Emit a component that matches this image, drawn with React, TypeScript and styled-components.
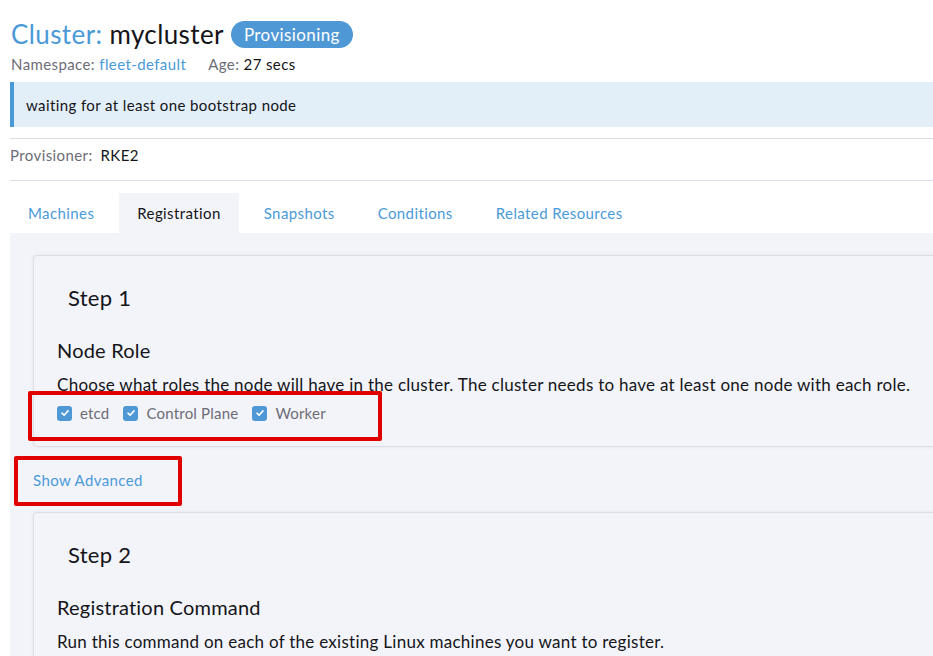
import React from 'react'
import styled, { createGlobalStyle } from 'styled-components'

const color = {
  link: '#4a9ad8',
  badge: '#4f98d6',
  text: '#141419',
  muted: '#6c6c76',
  border: '#dcdee7',
  panel: '#f3f4f9',
  banner: '#e3eff8',
  mark: '#e00000',
}

const GlobalStyle = createGlobalStyle`
  html, body {
    margin: 0;
    padding: 0;
    background: #fff;
    overflow: hidden;
  }
  body {
    font-family: Lato, 'Open Sans', 'Liberation Sans', sans-serif;
    color: ${color.text};
    letter-spacing: 0.4px;
  }
`

const Page = styled.div`
  position: relative;
  width: 1000px;
  padding: 17px 0 0 10px;
  box-sizing: border-box;
`

const TitleRow = styled.div`
  display: flex;
  align-items: center;
  gap: 6px;
  height: 34px;
  padding-left: 1px;
`

const Title = styled.h1`
  margin: 0;
  font-size: 26px;
  font-weight: 400;
  line-height: 34px;
  color: ${color.text};

  span {
    color: ${color.link};
  }
`

const Badge = styled.span`
  display: inline-flex;
  align-items: center;
  height: 27px;
  padding: 0 13px;
  border-radius: 14px;
  background: ${color.badge};
  color: #fff;
  font-size: 17px;
  margin-left: 1px;
`

const Meta = styled.div`
  display: flex;
  gap: 22px;
  font-size: 15px;
  line-height: 20px;
  margin-top: 3px;
  padding-left: 1px;
  color: ${color.text};

  .label {
    color: ${color.muted};
  }
  a {
    color: ${color.link};
    text-decoration: none;
  }
`

const Banner = styled.div`
  margin-top: 8px;
  height: 45px;
  display: flex;
  align-items: center;
  background: ${color.banner};
  border-left: 4px solid ${color.link};
  padding-left: 12px;
  font-size: 15px;
`

const Rule = styled.hr`
  margin: 0;
  border: 0;
  border-top: 1px solid ${color.border};
`

const Provisioner = styled.div`
  display: flex;
  gap: 8px;
  padding: 6px 0 15px;
  font-size: 15px;
  line-height: 20px;

  .label {
    color: ${color.muted};
  }
`

const Tabs = styled.div`
  display: flex;
  gap: 7px;
  margin-top: 12px;
`

const Tab = styled.div<{ $active?: boolean }>`
  height: 40px;
  display: flex;
  align-items: center;
  padding: 0 18px;
  font-size: 15px;
  color: ${(p) => (p.$active ? color.text : color.link)};
  background: ${(p) => (p.$active ? color.panel : 'transparent')};
`

const TabBody = styled.div`
  background: ${color.panel};
  padding: 22px 0 40px 23px;
`

const Card = styled.section`
  background: ${color.panel};
  border: 1px solid ${color.border};
  border-radius: 4px;
  box-shadow: 0 0 4px rgba(0, 0, 0, 0.06);
  padding: 19px 23px 23px;
`

const StepTitle = styled.h2`
  margin: 0;
  padding: 10px 11px;
  font-size: 22px;
  font-weight: 400;
  line-height: 26px;
  letter-spacing: 0.3px;
`

const SectionTitle = styled.h3`
  margin: 18px 0 0;
  font-size: 20px;
  font-weight: 400;
  line-height: 23px;
  letter-spacing: 0.2px;
`

const Description = styled.p`
  margin: 12px 0 0;
  font-size: 17px;
  line-height: 21px;
  letter-spacing: 0.27px;
`

const Checks = styled.div`
  display: flex;
  gap: 14px;
  margin-top: 8px;
`

const Check = styled.label`
  display: flex;
  align-items: center;
  gap: 8px;
  font-size: 15px;
  line-height: 20px;
  letter-spacing: 0.2px;
  color: ${color.muted};
`

const Box = styled.span`
  width: 15px;
  height: 15px;
  border-radius: 3px;
  background: ${color.badge};
  display: inline-flex;
  align-items: center;
  justify-content: center;
`

const AdvancedLink = styled.a`
  display: block;
  margin: 23px 0 22px;
  font-size: 15px;
  line-height: 20px;
  color: ${color.link};
  text-decoration: none;
`

const Callout = styled.div<{ $x: number; $y: number; $w: number; $h: number }>`
  position: absolute;
  left: ${(p) => p.$x}px;
  top: ${(p) => p.$y}px;
  width: ${(p) => p.$w}px;
  height: ${(p) => p.$h}px;
  border: 4px solid ${color.mark};
  border-radius: 2px;
  box-sizing: border-box;
  pointer-events: none;
`

const Checkbox = ({ label }: { label: string }) => (
  <Check>
    <Box>
      <svg width="10" height="10" viewBox="0 0 10 10">
        <path
          d="M2 5.2 L4.1 7.2 L8 2.9"
          fill="none"
          stroke="#fff"
          strokeWidth="1.6"
          strokeLinecap="round"
          strokeLinejoin="round"
        />
      </svg>
    </Box>
    {label}
  </Check>
)

const tabs = ['Machines', 'Registration', 'Snapshots', 'Conditions', 'Related Resources']

const App = () => (
  <>
    <GlobalStyle />
    <Page>
      <TitleRow>
        <Title>
          <span>Cluster:</span> mycluster
        </Title>
        <Badge>Provisioning</Badge>
      </TitleRow>
      <Meta>
        <div>
          <span className="label">Namespace: </span>
          <a href="#">fleet-default</a>
        </div>
        <div>
          <span className="label">Age: </span>27 secs
        </div>
      </Meta>
      <Banner>waiting for at least one bootstrap node</Banner>
      <div style={{ height: 11 }} />
      <Rule />
      <Provisioner>
        <span className="label">Provisioner:</span>
        <span>RKE2</span>
      </Provisioner>
      <Rule />
      <Tabs>
        {tabs.map((t) => (
          <Tab key={t} $active={t === 'Registration'}>
            {t}
          </Tab>
        ))}
      </Tabs>
      <TabBody>
        <Card>
          <StepTitle>Step 1</StepTitle>
          <SectionTitle>Node Role</SectionTitle>
          <Description>
            Choose what roles the node will have in the cluster. The cluster needs to have at least
            one node with each role.
          </Description>
          <Checks>
            <Checkbox label="etcd" />
            <Checkbox label="Control Plane" />
            <Checkbox label="Worker" />
          </Checks>
        </Card>
        <AdvancedLink href="#">Show Advanced</AdvancedLink>
        <Card>
          <StepTitle>Step 2</StepTitle>
          <SectionTitle>Registration Command</SectionTitle>
          <Description>
            Run this command on each of the existing Linux machines you want to register.
          </Description>
        </Card>
      </TabBody>
      <Callout $x={28} $y={391} $w={354} $h={50} />
      <Callout $x={14} $y={456} $w={168} $h={50} />
    </Page>
  </>
)

export default App
